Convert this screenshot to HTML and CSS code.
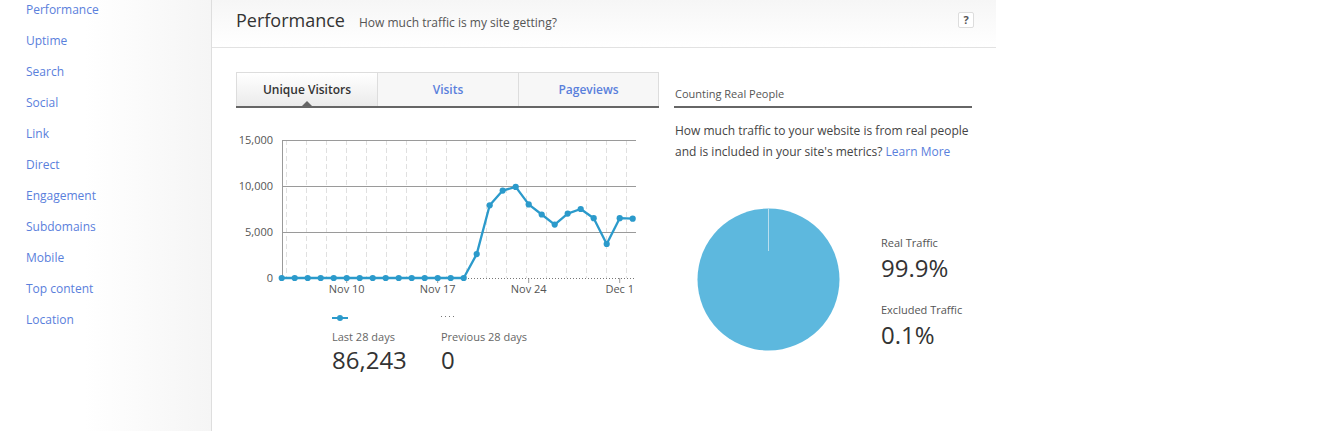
FILE: index.html
```html
<!DOCTYPE html>
<html>
<head>
<meta charset="utf-8">
<link rel="stylesheet" href="styles.css">
</head>
<body>
<div class="page">
  <nav class="sidebar">
    <ul class="nav-list">
      <li><a href="#">Performance</a></li>
      <li><a href="#">Uptime</a></li>
      <li><a href="#">Search</a></li>
      <li><a href="#">Social</a></li>
      <li><a href="#">Link</a></li>
      <li><a href="#">Direct</a></li>
      <li><a href="#">Engagement</a></li>
      <li><a href="#">Subdomains</a></li>
      <li><a href="#">Mobile</a></li>
      <li><a href="#">Top content</a></li>
      <li><a href="#">Location</a></li>
    </ul>
  </nav>
  <main class="main">
    <header class="header">
      <h1 class="title">Performance</h1>
      <span class="subtitle">How much traffic is my site getting?</span>
      <span class="help">?</span>
    </header>
    <div class="content">
      <section class="left">
        <div class="tabs">
          <div class="tab active">Unique Visitors<span class="caret"></span></div>
          <div class="tab">Visits</div>
          <div class="tab">Pageviews</div>
        </div>
        <svg class="chart" width="423" height="185" viewBox="236 120 423 185">
          <defs>
            <marker id="dot" markerUnits="userSpaceOnUse" markerWidth="8" markerHeight="8" refX="4" refY="4">
              <circle cx="4" cy="4" r="3.1" fill="#2b9acb"/>
            </marker>
          </defs>
          <g stroke="#e0e0e0" stroke-width="1" stroke-dasharray="5,3">
            <line x1="286.5" y1="140" x2="286.5" y2="278"/>
            <line x1="306.5" y1="140" x2="306.5" y2="278"/>
            <line x1="326.5" y1="140" x2="326.5" y2="278"/>
            <line x1="346.5" y1="140" x2="346.5" y2="278"/>
            <line x1="366.5" y1="140" x2="366.5" y2="278"/>
            <line x1="386.5" y1="140" x2="386.5" y2="278"/>
            <line x1="406.5" y1="140" x2="406.5" y2="278"/>
            <line x1="426.5" y1="140" x2="426.5" y2="278"/>
            <line x1="446.5" y1="140" x2="446.5" y2="278"/>
            <line x1="466.5" y1="140" x2="466.5" y2="278"/>
            <line x1="486.5" y1="140" x2="486.5" y2="278"/>
            <line x1="506.5" y1="140" x2="506.5" y2="278"/>
            <line x1="526.5" y1="140" x2="526.5" y2="278"/>
            <line x1="546.5" y1="140" x2="546.5" y2="278"/>
            <line x1="566.5" y1="140" x2="566.5" y2="278"/>
            <line x1="586.5" y1="140" x2="586.5" y2="278"/>
            <line x1="606.5" y1="140" x2="606.5" y2="278"/>
            <line x1="626.5" y1="140" x2="626.5" y2="278"/>
          </g>
          <g stroke="#9a9a9a" stroke-width="1">
            <line x1="282" y1="140.5" x2="636" y2="140.5"/>
            <line x1="282" y1="186.5" x2="636" y2="186.5"/>
            <line x1="282" y1="232.5" x2="636" y2="232.5"/>
            <line x1="282.5" y1="140" x2="282.5" y2="278"/>
            <line x1="346.7" y1="278" x2="346.7" y2="283"/>
            <line x1="437.7" y1="278" x2="437.7" y2="283"/>
            <line x1="528.7" y1="278" x2="528.7" y2="283"/>
            <line x1="619.7" y1="278" x2="619.7" y2="283"/>
          </g>
          <line x1="282" y1="278.5" x2="636" y2="278.5" stroke="#777" stroke-width="1" stroke-dasharray="1,2"/>
          <polyline fill="none" stroke="#2b9acb" stroke-width="2.3" stroke-linejoin="round"
            marker-start="url(#dot)" marker-mid="url(#dot)" marker-end="url(#dot)"
            points="281.7,278 294.7,278 307.7,278 320.7,278 333.7,278 346.7,278 359.7,278 372.7,278 385.7,278 398.7,278 411.7,278 424.7,278 437.7,278 450.7,278 463.7,278 476.7,254.1 489.7,205.3 502.7,190.6 515.7,186.9 528.7,204.4 541.7,214.5 554.7,224.6 567.7,213.6 580.7,209 593.7,218.2 606.7,244 619.7,218.2 632.7,218.7"/>
          <g class="ylab" text-anchor="end">
            <text x="273" y="144">15,000</text>
            <text x="273" y="190">10,000</text>
            <text x="273" y="236">5,000</text>
            <text x="273" y="282">0</text>
          </g>
          <g class="xlab" text-anchor="middle">
            <text x="346.7" y="293">Nov 10</text>
            <text x="437.7" y="293">Nov 17</text>
            <text x="528.7" y="293">Nov 24</text>
            <text x="619.7" y="293">Dec 1</text>
          </g>
        </svg>
        <div class="legend">
          <div class="legend-item current">
            <svg class="marker" width="20" height="10" viewBox="0 0 20 10">
              <line x1="0" y1="5" x2="16" y2="5" stroke="#2b9acb" stroke-width="2"/>
              <circle cx="8" cy="5" r="3" fill="#2b9acb"/>
            </svg>
            <div class="legend-label">Last 28 days</div>
            <div class="legend-value">86,243</div>
          </div>
          <div class="legend-item">
            <svg class="marker" width="20" height="10" viewBox="0 0 20 10">
              <line x1="0" y1="3.5" x2="15" y2="3.5" stroke="#777" stroke-width="1" stroke-dasharray="1,3"/>
            </svg>
            <div class="legend-label">Previous 28 days</div>
            <div class="legend-value">0</div>
          </div>
        </div>
      </section>
      <aside class="right">
        <h2 class="right-title">Counting Real People</h2>
        <p class="right-text">How much traffic to your website is from real people and is included in your site's metrics? <a href="#">Learn More</a></p>
        <div class="pie-row">
          <svg class="pie" width="143" height="143" viewBox="0 0 143 143">
            <circle cx="71.5" cy="71.5" r="71" fill="#5db8de"/>
            <line x1="71.5" y1="0.5" x2="71.5" y2="43" stroke="#b9dff0" stroke-width="1"/>
          </svg>
          <div class="pie-legend">
            <div class="pie-label">Real Traffic</div>
            <div class="pie-value">99.9%</div>
            <div class="pie-label second">Excluded Traffic</div>
            <div class="pie-value">0.1%</div>
          </div>
        </div>
      </aside>
    </div>
  </main>
</div>
</body>
</html>
```

FILE: styles.css
```css
* { box-sizing: border-box; }
html, body { margin: 0; padding: 0; background: #fff; }
body {
  font-family: "Open Sans", "Liberation Sans", sans-serif;
  color: #333;
  width: 1321px;
  height: 431px;
  overflow: hidden;
}
a { text-decoration: none; color: #5a80dc; }

.page { display: flex; height: 431px; }

.sidebar {
  width: 212px;
  flex: none;
  border-right: 1px solid #dedede;
  background: linear-gradient(to right, #ffffff 0%, #ffffff 40%, #f5f5f5 100%);
}
.nav-list {
  list-style: none;
  margin: -6px 0 0 0;
  padding: 0 0 0 26px;
}
.nav-list li {
  line-height: 31px;
  font-size: 12px;
}
.nav-list a { color: #5a80dc; }

.main { width: 784px; flex: none; }

.header {
  height: 48px;
  border-bottom: 1px solid #e2e2e2;
  background: linear-gradient(#f6f6f6, #ffffff);
  display: flex;
  align-items: baseline;
  padding: 6px 22px 0 24px;
}
.title {
  margin: 0;
  font-size: 18px;
  font-weight: 400;
  line-height: 28px;
  color: #333;
}
.subtitle {
  margin-left: 14px;
  font-size: 12px;
  color: #555;
}
.help {
  margin-left: auto;
  align-self: flex-start;
  margin-top: 6px;
  width: 16px;
  height: 16px;
  border: 1px solid #ddd;
  border-radius: 2px;
  background: #fff;
  font-size: 11px;
  font-weight: 700;
  line-height: 14px;
  text-align: center;
  color: #555;
}

.content {
  display: flex;
  padding: 24px 0 0 24px;
}
.left { width: 423px; flex: none; }

.tabs {
  display: flex;
  height: 36px;
  border-bottom: 2px solid #666;
}
.tab {
  position: relative;
  flex: none;
  width: 141px;
  border-top: 1px solid #ddd;
  border-left: 1px solid #ddd;
  background: #f7f7f7;
  font-size: 12px;
  font-weight: 600;
  color: #5a80dc;
  text-align: center;
  line-height: 33px;
}
.tab:last-child { border-right: 1px solid #ddd; }
.tab.active {
  color: #333;
  background: linear-gradient(#ffffff, #ebebeb);
}
.caret {
  position: absolute;
  left: 50%;
  bottom: 0;
  margin-left: -5px;
  width: 0;
  height: 0;
  border-left: 5px solid transparent;
  border-right: 5px solid transparent;
  border-bottom: 5px solid #666;
}

.chart { display: block; margin-top: 12px; }
.ylab text, .xlab text {
  font-family: "Open Sans", "Liberation Sans", sans-serif;
  font-size: 11px;
  fill: #555;
}

.legend {
  display: flex;
  padding-left: 96px;
}
.legend-item { width: 109px; }
.marker { display: block; margin-top: 8px; }
.legend-label {
  margin-top: 6px;
  font-size: 11px;
  line-height: 16px;
  color: #666;
}
.legend-value {
  font-size: 24px;
  line-height: 30px;
  color: #333;
}

.right {
  width: 298px;
  margin-left: 15px;
  flex: none;
}
.right-title {
  margin: 0;
  padding: 13px 0 3px 1px;
  font-size: 11px;
  font-weight: 400;
  line-height: 18px;
  color: #555;
  border-bottom: 2px solid #666;
}
.right-text {
  margin: 12px 0 0 1px;
  font-size: 12px;
  line-height: 21px;
  color: #444;
}
.pie-row {
  display: flex;
  align-items: flex-start;
  margin-top: 46px;
}
.pie { display: block; margin-left: 23px; flex: none; }
.pie-legend {
  margin-left: 41px;
  padding-top: 27px;
}
.pie-label {
  font-size: 11px;
  line-height: 16px;
  color: #555;
}
.pie-label.second { margin-top: 19px; }
.pie-value {
  margin-top: 2px;
  font-size: 24px;
  line-height: 30px;
  color: #333;
}
```
